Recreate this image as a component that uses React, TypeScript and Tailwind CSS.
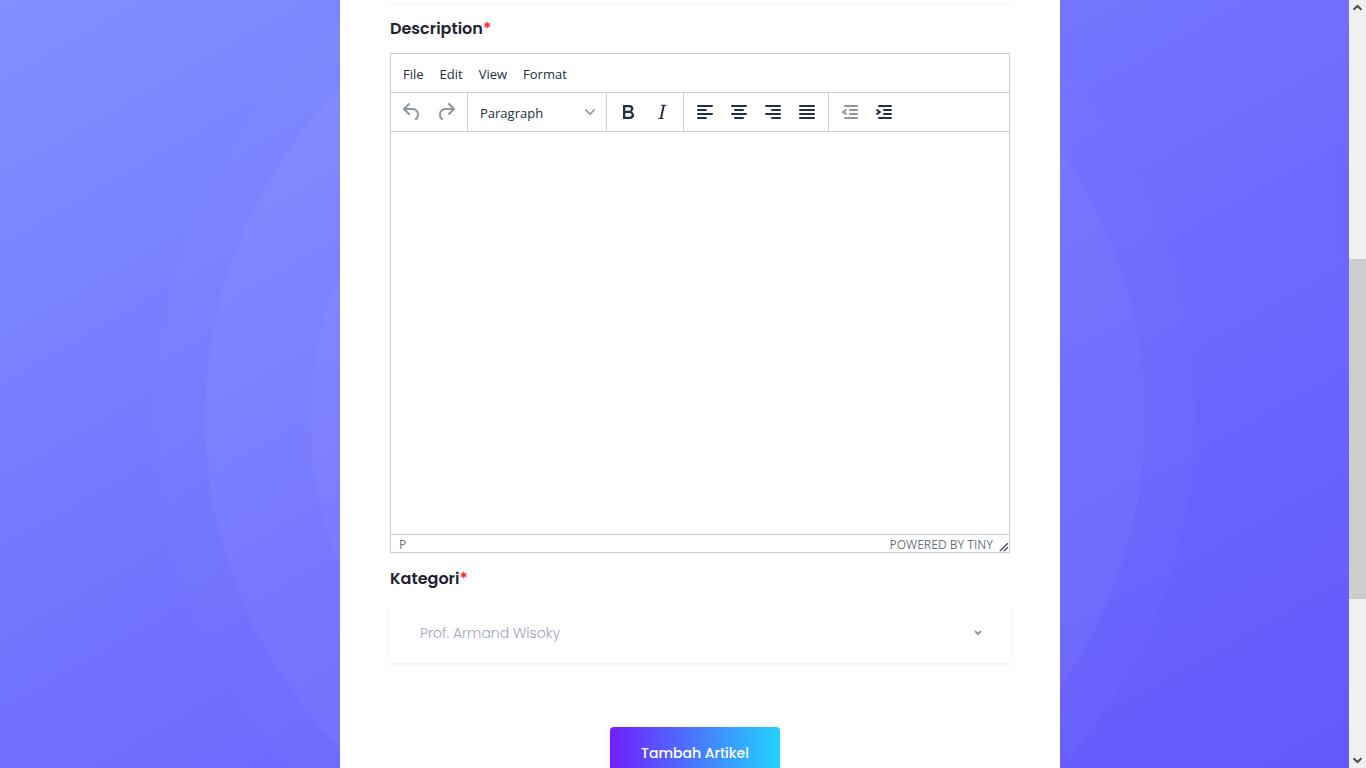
import React from "react";

const icons = {
  undo: "M6.4 8H12c3.7 0 6.2 2 6.8 5.1.6 2.7-.4 5.6-2.3 6.8a1 1 0 0 1-1-1.8c1.1-.6 1.8-2.7 1.4-4.6-.5-2.1-2.1-3.5-4.9-3.5H6.4l3.3 3.3a1 1 0 1 1-1.4 1.4l-5-5a1 1 0 0 1 0-1.4l5-5a1 1 0 0 1 1.4 1.4L6.4 8z",
  redo: "M17.6 10H12c-2.8 0-4.4 1.4-4.9 3.5-.4 2 .3 4 1.4 4.6a1 1 0 1 1-1 1.8c-2-1.2-2.9-4.1-2.3-6.8.6-3 3-5.1 6.8-5.1h5.6l-3.3-3.3a1 1 0 1 1 1.4-1.4l5 5a1 1 0 0 1 0 1.4l-5 5a1 1 0 0 1-1.4-1.4l3.3-3.3z",
  bold: "M7.8 19c-.3 0-.5 0-.6-.2l-.2-.5V5.7c0-.2 0-.4.2-.5l.6-.2h5c1.5 0 2.7.3 3.5 1 .7.6 1.1 1.4 1.1 2.5a3 3 0 0 1-.6 1.9c-.4.6-1 1-1.6 1.2.4.1.9.3 1.3.6s.8.7 1 1.2c.4.4.5 1 .5 1.6 0 1.3-.4 2.3-1.3 3-.8.7-2.1 1-3.8 1H7.8zm5-8.3c.6 0 1.2-.1 1.6-.5.4-.3.6-.7.6-1.3 0-1.1-.8-1.7-2.3-1.7H9.3v3.5h3.4zm.5 6c.7 0 1.3-.1 1.7-.4.4-.4.6-.9.6-1.5s-.2-1-.7-1.4c-.4-.3-1-.4-2-.4H9.4v3.8h4z",
  italic:
    "M16.7 4.7l-.1.9h-.3c-.6 0-1 0-1.4.3-.3.3-.4.6-.5 1.1l-2.1 9.8v.6c0 .5.4.8 1.4.8h.2l-.2.8H8l.2-.8h.2c1.1 0 1.8-.5 2-1.5l2-9.8.1-.5c0-.6-.4-.8-1.4-.8h-.3l.2-.9h5.8z",
  left: "M5 5h14a1 1 0 0 1 0 2H5a1 1 0 1 1 0-2zm0 4h8a1 1 0 0 1 0 2H5a1 1 0 1 1 0-2zm0 8h8a1 1 0 0 1 0 2H5a1 1 0 0 1 0-2zm0-4h14a1 1 0 0 1 0 2H5a1 1 0 0 1 0-2z",
  center:
    "M5 5h14a1 1 0 0 1 0 2H5a1 1 0 1 1 0-2zm3 4h8a1 1 0 0 1 0 2H8a1 1 0 1 1 0-2zm0 8h8a1 1 0 0 1 0 2H8a1 1 0 0 1 0-2zm-3-4h14a1 1 0 0 1 0 2H5a1 1 0 0 1 0-2z",
  right:
    "M5 5h14a1 1 0 0 1 0 2H5a1 1 0 1 1 0-2zm6 4h8a1 1 0 0 1 0 2h-8a1 1 0 0 1 0-2zm0 8h8a1 1 0 0 1 0 2h-8a1 1 0 0 1 0-2zm-6-4h14a1 1 0 0 1 0 2H5a1 1 0 0 1 0-2z",
  justify:
    "M5 5h14a1 1 0 0 1 0 2H5a1 1 0 1 1 0-2zm0 4h14a1 1 0 0 1 0 2H5a1 1 0 1 1 0-2zm0 4h14a1 1 0 0 1 0 2H5a1 1 0 0 1 0-2zm0 4h14a1 1 0 0 1 0 2H5a1 1 0 0 1 0-2z",
  outdent:
    "M7 5h12a1 1 0 0 1 0 2H7a1 1 0 1 1 0-2zm5 4h7a1 1 0 0 1 0 2h-7a1 1 0 0 1 0-2zm0 4h7a1 1 0 0 1 0 2h-7a1 1 0 0 1 0-2zm-5 4h12a1 1 0 0 1 0 2H7a1 1 0 0 1 0-2zm1.6-3.8a1 1 0 0 1-1.2 1.6l-3-2a1 1 0 0 1 0-1.6l3-2a1 1 0 0 1 1.2 1.6L6.8 12l1.8 1.2z",
  indent:
    "M7 5h12a1 1 0 0 1 0 2H7a1 1 0 1 1 0-2zm5 4h7a1 1 0 0 1 0 2h-7a1 1 0 0 1 0-2zm0 4h7a1 1 0 0 1 0 2h-7a1 1 0 0 1 0-2zm-5 4h12a1 1 0 0 1 0 2H7a1 1 0 0 1 0-2zm-2.6-3.8L6.2 12l-1.8-1.2a1 1 0 0 1 1.2-1.6l3 2a1 1 0 0 1 0 1.6l-3 2a1 1 0 1 1-1.2-1.6z",
};

function ToolButton({ icon, label, disabled = false }: { icon: keyof typeof icons; label: string; disabled?: boolean }) {
  return (
    <button
      type="button"
      aria-label={label}
      disabled={disabled}
      className="flex h-[34px] w-[34px] items-center justify-center text-[#222f3e] disabled:opacity-50"
    >
      <svg width="24" height="24" viewBox="0 0 24 24" fill="currentColor" fillRule="evenodd" aria-hidden="true">
        <path d={icons[icon]} />
      </svg>
    </button>
  );
}

function ToolGroup({ children, last = false }: { children: React.ReactNode; last?: boolean }) {
  return (
    <div className={last ? "flex items-center px-1" : "flex items-center border-r border-[#cccccc] px-1"}>
      {children}
    </div>
  );
}

function Editor() {
  return (
    <div className="flex h-[500px] flex-col border border-[#cccccc] bg-white font-['Segoe_UI','Open_Sans','Noto_Sans',sans-serif] text-[13px] text-[#222f3e]">
      <div className="flex h-[39px] items-center border-b border-[#cccccc] px-1 pt-1">
        {["File", "Edit", "View", "Format"].map((item) => (
          <button key={item} type="button" className="px-2">
            {item}
          </button>
        ))}
      </div>
      <div className="flex h-[39px] border-b border-[#cccccc]">
        <ToolGroup>
          <ToolButton icon="undo" label="Undo" disabled />
          <ToolButton icon="redo" label="Redo" disabled />
        </ToolGroup>
        <ToolGroup>
          <div className="relative flex items-center">
            <select aria-label="Blocks" className="h-[34px] w-[130px] appearance-none bg-transparent px-2 pt-1">
              <option>Paragraph</option>
            </select>
            <svg
              className="pointer-events-none absolute right-[7px]"
              width="10"
              height="10"
              viewBox="0 0 10 10"
              fill="#222f3e"
              fillOpacity="0.5"
              aria-hidden="true"
            >
              <path d="M8.7 2.2c.3-.3.8-.3 1 0 .4.4.4.9 0 1.2L5.7 7.8c-.3.3-.9.3-1.2 0L.2 3.4a.8.8 0 0 1 0-1.2c.3-.3.8-.3 1.1 0L5 6l3.7-3.8Z" />
            </svg>
          </div>
        </ToolGroup>
        <ToolGroup>
          <ToolButton icon="bold" label="Bold" />
          <ToolButton icon="italic" label="Italic" />
        </ToolGroup>
        <ToolGroup>
          <ToolButton icon="left" label="Align left" />
          <ToolButton icon="center" label="Align center" />
          <ToolButton icon="right" label="Align right" />
          <ToolButton icon="justify" label="Justify" />
        </ToolGroup>
        <ToolGroup last>
          <ToolButton icon="outdent" label="Decrease indent" disabled />
          <ToolButton icon="indent" label="Increase indent" />
        </ToolGroup>
      </div>
      <textarea id="description" className="block w-full flex-1 resize-none p-4 outline-none" />
      <div className="flex h-[18px] items-center border-t border-[#cccccc] pt-[3px] pl-2 text-xs text-[#222f3e]/70">
        <span className="flex-1">P</span>
        <a href="#tiny">POWERED BY TINY</a>
        <svg className="ml-[6px] self-end" width="10" height="10" viewBox="0 0 10 10" aria-hidden="true">
          <path
            d="M1.2 8.8 8.6 1.4M5.2 8.8 8.6 5.4"
            fill="none"
            stroke="#222f3e"
            strokeOpacity="0.8"
            strokeWidth="1.4"
            strokeLinecap="round"
          />
        </svg>
      </div>
    </div>
  );
}

function FieldLabel({ htmlFor, children }: { htmlFor: string; children: React.ReactNode }) {
  return (
    <label htmlFor={htmlFor} className="flex h-[50px] items-center pt-[2px] text-base font-semibold text-[#222233]">
      {children}
      <span className="text-[#ff2222]">*</span>
    </label>
  );
}

function Scrollbar() {
  return (
    <div className="flex w-[17px] shrink-0 flex-col bg-[#f0f0f0]" aria-hidden="true">
      <svg width="17" height="17" viewBox="0 0 17 17" fill="none" stroke="#505050" strokeWidth="2">
        <path d="M4.5 9.8 8.5 6 12.5 9.8" />
      </svg>
      <div className="grow-[242]" />
      <div className="h-[340px] bg-[#cdcdcd]" />
      <div className="grow-[152]" />
      <svg width="17" height="17" viewBox="0 0 17 17" fill="none" stroke="#505050" strokeWidth="2">
        <path d="M4.5 7.2 8.5 11 12.5 7.2" />
      </svg>
    </div>
  );
}

export default function App() {
  return (
    <div className="flex h-screen overflow-hidden font-[Poppins,Inter,sans-serif]">
      <main className="relative flex min-w-0 flex-1 justify-center overflow-hidden bg-linear-to-br/srgb from-[#8090ff] via-[#706ffe] to-[#6259fb] pl-[51px]">
        <svg
          className="absolute top-[-102px] left-1/2 -translate-x-1/2"
          width="1040"
          height="1040"
          viewBox="0 0 1040 1040"
          fill="#ffffff"
          aria-hidden="true"
        >
          <circle cx="520" cy="520" r="520" fillOpacity="0.02" />
          <circle cx="520" cy="520" r="470" fillOpacity="0.04" />
          <circle cx="520" cy="520" r="365" fillOpacity="0.03" />
        </svg>
        <form className="relative min-h-full w-full max-w-[720px] self-start bg-white px-[50px]">
          <div className="h-[3px] rounded-b shadow-[0_2px_4px_rgba(0,0,0,0.05)]" />
          <FieldLabel htmlFor="description">Description</FieldLabel>
          <Editor />
          <FieldLabel htmlFor="kategori">Kategori</FieldLabel>
          <div className="relative flex items-center">
            <select
              id="kategori"
              className="h-[60px] w-full appearance-none bg-white px-[30px] text-sm font-light text-[#a0a3bd] shadow-[0_2px_4px_rgba(0,0,0,0.06)]"
            >
              <option>Prof. Armand Wisoky</option>
            </select>
            <svg
              className="pointer-events-none absolute right-7"
              width="8"
              height="6"
              viewBox="0 0 8 6"
              fill="none"
              stroke="#999999"
              strokeWidth="2"
              aria-hidden="true"
            >
              <path d="M1 1 4 4 7 1" />
            </svg>
          </div>
          <div className="flex justify-center pt-16 pr-[10px]">
            <button
              type="submit"
              className="h-[52px] w-[170px] rounded bg-linear-to-r/srgb from-[#6f1fff] to-[#22d2ff] text-sm font-medium text-white shadow-[0_2px_6px_rgba(0,0,0,0.1)]"
            >
              Tambah Artikel
            </button>
          </div>
        </form>
      </main>
      <Scrollbar />
    </div>
  );
}
